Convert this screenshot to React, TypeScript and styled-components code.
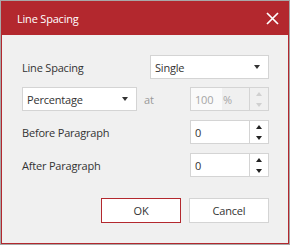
import styled, { createGlobalStyle } from 'styled-components';

const GlobalStyle = createGlobalStyle`
  html, body {
    margin: 0;
    padding: 0;
    background: #a8a8a8;
  }
  body {
    font-family: "Open Sans", "Liberation Sans", sans-serif;
    font-size: 11px;
    letter-spacing: -0.2px;
    color: #333;
  }
  #root {
    padding: 1px;
    width: 288px;
  }
`;

const Dialog = styled.div`
  width: 288px;
  height: 243px;
  box-sizing: border-box;
  border: 1px solid #b3282e;
  background: #f0f0f0;
  display: flex;
  flex-direction: column;
`;

const TitleBar = styled.div`
  height: 33px;
  background: #b3282e;
  color: #fff;
  display: flex;
  align-items: center;
  justify-content: space-between;
  padding: 0 9px 0 15px;
  font-size: 11px;
`;

const CloseButton = styled.button`
  border: 0;
  background: transparent;
  padding: 0;
  width: 14px;
  height: 14px;
  display: flex;
  align-items: center;
  justify-content: center;
  cursor: pointer;
`;

const Body = styled.div`
  padding: 20px 19px 0 20px;
  display: flex;
  flex-direction: column;
`;

const Row = styled.div<{ $gap?: number }>`
  display: flex;
  align-items: center;
  height: 24px;
  margin-bottom: ${(p) => p.$gap ?? 9}px;
`;

const Label = styled.span`
  flex: 1;
`;

const AtLabel = styled.span`
  margin-left: 7px;
  color: #999;
`;

const Select = styled.div<{ $width: number; $inline?: boolean }>`
  width: ${(p) => p.$width}px;
  height: 24px;
  box-sizing: border-box;
  border: 1px solid #d4d4d4;
  background: #fff;
  display: flex;
  align-items: center;
  justify-content: space-between;
  padding: 0 8px 0 4px;
  margin-left: ${(p) => (p.$inline ? '0' : 'auto')};
  color: #333;
`;

const Caret = styled.span`
  width: 0;
  height: 0;
  border-left: 3.5px solid transparent;
  border-right: 3.5px solid transparent;
  border-top: 4px solid #333;
`;

const Spin = styled.div<{ $disabled?: boolean }>`
  width: 79px;
  height: 24px;
  box-sizing: border-box;
  border: 1px solid #d4d4d4;
  background: ${(p) => (p.$disabled ? '#f0f0f0' : '#fff')};
  display: flex;
  margin-left: auto;
  color: ${(p) => (p.$disabled ? '#a6a6a6' : '#333')};
`;

const SpinValue = styled.div<{ $disabled?: boolean }>`
  width: ${(p) => (p.$disabled ? '27px' : 'auto')};
  flex: ${(p) => (p.$disabled ? 'none' : '1')};
  background: ${(p) => (p.$disabled ? '#fafafa' : '#fff')};
  padding-left: 4px;
  display: flex;
  align-items: center;
`;

const SpinUnit = styled.div`
  flex: 1;
  display: flex;
  align-items: center;
  padding-left: 1px;
`;

const SpinArrows = styled.div`
  width: 18px;
  border-left: 1px solid #d4d4d4;
  display: flex;
  flex-direction: column;
  align-items: center;
  justify-content: center;
  gap: 7px;
`;

const Arrow = styled.span<{ $up?: boolean; $disabled?: boolean }>`
  width: 0;
  height: 0;
  border-left: 3px solid transparent;
  border-right: 3px solid transparent;
  ${(p) => (p.$up ? 'border-bottom' : 'border-top')}: 4px solid
    ${(p) => (p.$disabled ? '#d0d0d0' : '#222')};
`;

const Footer = styled.div`
  display: flex;
  justify-content: flex-end;
  gap: 8px;
  padding: 21px 19px 0 0;
`;

const Button = styled.button<{ $primary?: boolean }>`
  width: 80px;
  height: 25px;
  box-sizing: border-box;
  border: 1px solid ${(p) => (p.$primary ? '#b3282e' : '#d4d4d4')};
  background: #fff;
  font-family: inherit;
  font-size: 11px;
  letter-spacing: inherit;
  color: #333;
  cursor: pointer;
`;

const SpinBox = ({ value, unit, disabled }: { value: string; unit?: string; disabled?: boolean }) => (
  <Spin $disabled={disabled}>
    <SpinValue $disabled={disabled}>{value}</SpinValue>
    {unit && <SpinUnit>{unit}</SpinUnit>}
    <SpinArrows>
      <Arrow $up $disabled={disabled} />
      <Arrow $disabled={disabled} />
    </SpinArrows>
  </Spin>
);

export default function App() {
  return (
    <>
      <GlobalStyle />
      <Dialog>
        <TitleBar>
          <span>Line Spacing</span>
          <CloseButton aria-label="Close">
            <svg width="13" height="13" viewBox="0 0 13 13">
              <path d="M1 1L12 12M12 1L1 12" stroke="#fff" strokeWidth="1.7" />
            </svg>
          </CloseButton>
        </TitleBar>
        <Body>
          <Row $gap={8}>
            <Label>Line Spacing</Label>
            <Select $width={119}>
              Single
              <Caret />
            </Select>
          </Row>
          <Row>
            <Select $width={115} $inline>
              Percentage
              <Caret />
            </Select>
            <AtLabel>at</AtLabel>
            <SpinBox value="100" unit="%" disabled />
          </Row>
          <Row>
            <Label>Before Paragraph</Label>
            <SpinBox value="0" />
          </Row>
          <Row $gap={0}>
            <Label>After Paragraph</Label>
            <SpinBox value="0" />
          </Row>
        </Body>
        <Footer>
          <Button $primary>OK</Button>
          <Button>Cancel</Button>
        </Footer>
      </Dialog>
    </>
  );
}
